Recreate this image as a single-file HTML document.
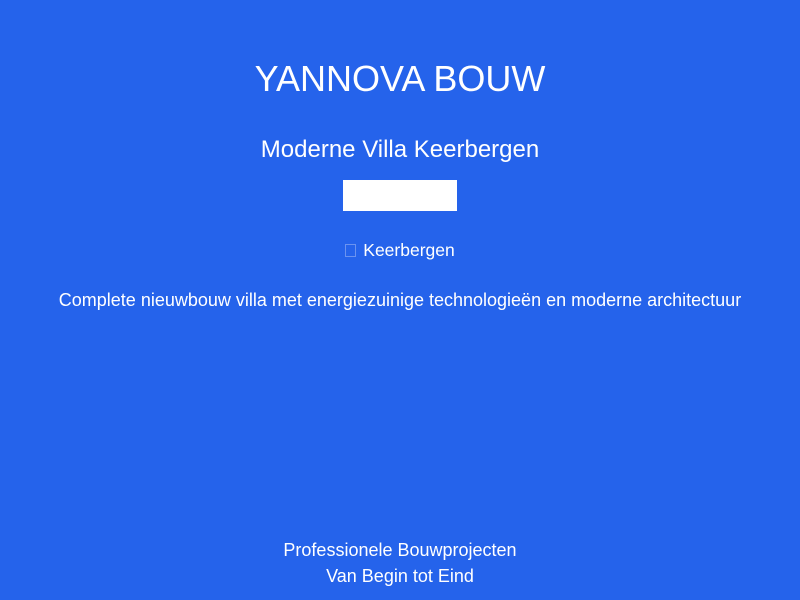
<!DOCTYPE html>
<html><head><style>
body{margin:0;width:800px;height:600px;background:#2563eb;color:#fff;font-family:"Liberation Sans",sans-serif;position:relative;overflow:hidden}
.c{position:absolute;left:0;width:800px;text-align:center;white-space:nowrap}
</style></head><body>
<div class="c" style="top:59px;font-size:36px;line-height:40px">YANNOVA BOUW</div>
<div class="c" style="top:137px;font-size:24px;line-height:26px">Moderne Villa Keerbergen</div>
<div style="position:absolute;left:343px;top:180px;width:114px;height:31px;background:#fff"></div>
<div class="c" style="top:240px;font-size:17.5px;line-height:20px"><span style="display:inline-block;width:9px;height:11px;border:1px solid #6b93f0;vertical-align:-1px;margin-right:7px"></span>Keerbergen</div>
<div class="c" style="top:290px;font-size:18px;line-height:20px">Complete nieuwbouw villa met energiezuinige technologieën en moderne architectuur</div>
<div class="c" style="top:537px;font-size:18px;line-height:26px">Professionele Bouwprojecten<br>Van Begin tot Eind</div>
</body></html>
